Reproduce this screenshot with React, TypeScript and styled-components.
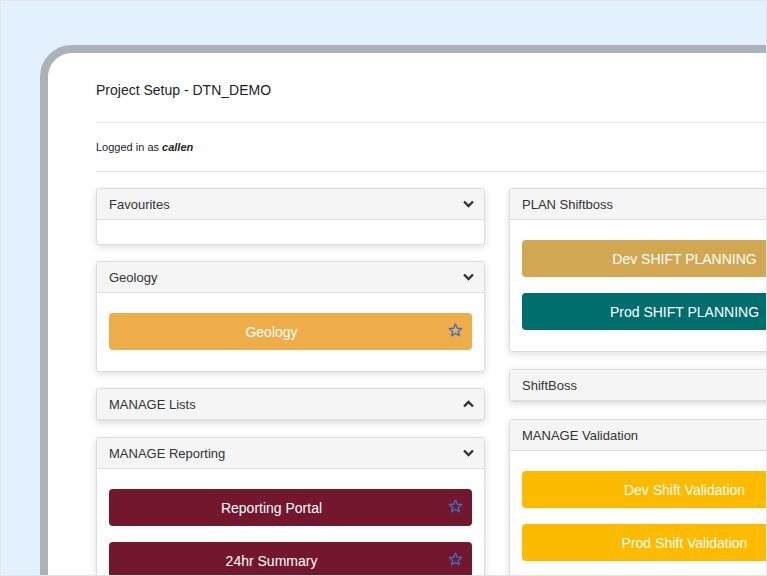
import React from "react";
import styled, { createGlobalStyle } from "styled-components";

const GlobalStyle = createGlobalStyle`
  html, body {
    margin: 0;
    padding: 0;
  }
  body {
    font-family: "Liberation Sans", Arial, sans-serif;
    color: #222;
  }
`;

const Screen = styled.div`
  width: 767px;
  height: 576px;
  box-sizing: border-box;
  border: 1px solid #e2e4e7;
  background: #e3f1fe;
  overflow: hidden;
  padding: 44px 0 0 39px;
`;

const Device = styled.div`
  width: 900px;
  height: 700px;
  border: 8px solid #abb2b9;
  border-top-left-radius: 32px;
  background: #fff;
  padding: 0 0 0 48px;
`;

const Title = styled.div`
  font-size: 14px;
  line-height: 20px;
  padding: 27px 0 22px;
  border-bottom: 1px solid #e5e5e5;
`;

const LoggedIn = styled.div`
  font-size: 11px;
  line-height: 14px;
  padding: 17px 0 17px;
  border-bottom: 1px solid #e5e5e5;

  b {
    font-style: italic;
  }
`;

const Columns = styled.div`
  display: grid;
  grid-template-columns: 389px 389px;
  column-gap: 24px;
  align-items: start;
  padding-top: 16px;
`;

const Column = styled.div<{ $gap: number }>`
  display: flex;
  flex-direction: column;
  gap: ${(p) => p.$gap}px;
`;

const Panel = styled.div`
  border: 1px solid #ddd;
  border-radius: 3px;
  background: #fff;
  box-shadow: 0 2px 7px rgba(0, 0, 0, 0.14);
`;

const PanelHeader = styled.div`
  display: flex;
  align-items: center;
  justify-content: space-between;
  height: 30px;
  padding: 0 10px 0 12px;
  background: #f5f5f5;
  font-size: 13px;
  color: #333;
  border-bottom: 1px solid #ddd;
  border-radius: 3px 3px 0 0;

  &:last-child {
    border-radius: 3px;
  }
`;

const PanelBody = styled.div`
  display: flex;
  flex-direction: column;
  gap: 16px;
  min-height: 24px;
  padding: 20px 12px 21px;
  box-sizing: border-box;

  &:empty {
    padding: 0;
  }
`;

const Button = styled.div<{ $bg: string }>`
  display: flex;
  align-items: center;
  height: 37px;
  border-radius: 4px;
  background: ${(p) => p.$bg};
  color: #fff;
  font-size: 14px;
  padding-right: 9px;
`;

const Label = styled.span`
  flex: 1;
  text-align: center;
`;

const StarBox = styled.span`
  width: 29px;
  display: flex;
  justify-content: flex-end;
  margin-top: -4px;
`;

const Chevron = ({ up }: { up?: boolean }) => (
  <svg width="11" height="8" viewBox="0 0 11 8">
    <path
      d={up ? "M1 6.5 L5.5 2 L10 6.5" : "M1 1.5 L5.5 6 L10 1.5"}
      fill="none"
      stroke="#333"
      strokeWidth="2.4"
      strokeLinejoin="miter"
    />
  </svg>
);

const Star = () => (
  <svg width="15" height="14" viewBox="0 0 24 23">
    <path
      d="M12 1.8 L14.9 8.6 L22.2 9.1 L16.6 13.8 L18.4 21 L12 17.1 L5.6 21 L7.4 13.8 L1.8 9.1 L9.1 8.6 Z"
      fill="none"
      stroke="#3d6fc6"
      strokeWidth="2.2"
      strokeLinejoin="round"
    />
  </svg>
);

type Item = { label: string; bg: string; star?: boolean };
type Section = { title: string; open: boolean; items: Item[] };

const left: Section[] = [
  { title: "Favourites", open: true, items: [] },
  { title: "Geology", open: true, items: [{ label: "Geology", bg: "#efad4a", star: true }] },
  { title: "MANAGE Lists", open: false, items: [] },
  {
    title: "MANAGE Reporting",
    open: true,
    items: [
      { label: "Reporting Portal", bg: "#72172e", star: true },
      { label: "24hr Summary", bg: "#72172e", star: true },
    ],
  },
];

const right: Section[] = [
  {
    title: "PLAN Shiftboss",
    open: true,
    items: [
      { label: "Dev SHIFT PLANNING", bg: "#d2a752", star: true },
      { label: "Prod SHIFT PLANNING", bg: "#006e6d", star: true },
    ],
  },
  { title: "ShiftBoss", open: false, items: [] },
  {
    title: "MANAGE Validation",
    open: true,
    items: [
      { label: "Dev Shift Validation", bg: "#fdbb00", star: true },
      { label: "Prod Shift Validation", bg: "#fdbb00", star: true },
    ],
  },
];

function SectionPanel({ s }: { s: Section }) {
  return (
    <Panel>
      <PanelHeader>
        <span>{s.title}</span>
        <Chevron up={!s.open} />
      </PanelHeader>
      {s.open && (
        <PanelBody>
          {s.items.map((it) => (
            <Button key={it.label} $bg={it.bg}>
              <Label>{it.label}</Label>
              <StarBox>{it.star && <Star />}</StarBox>
            </Button>
          ))}
        </PanelBody>
      )}
    </Panel>
  );
}

export default function App() {
  return (
    <>
      <GlobalStyle />
      <Screen>
        <Device>
          <Title>Project Setup - DTN_DEMO</Title>
          <LoggedIn>
            Logged in as <b>callen</b>
          </LoggedIn>
          <Columns>
            <Column $gap={16}>
              {left.map((s) => (
                <SectionPanel key={s.title} s={s} />
              ))}
            </Column>
            <Column $gap={17}>
              {right.map((s) => (
                <SectionPanel key={s.title} s={s} />
              ))}
            </Column>
          </Columns>
        </Device>
      </Screen>
    </>
  );
}
